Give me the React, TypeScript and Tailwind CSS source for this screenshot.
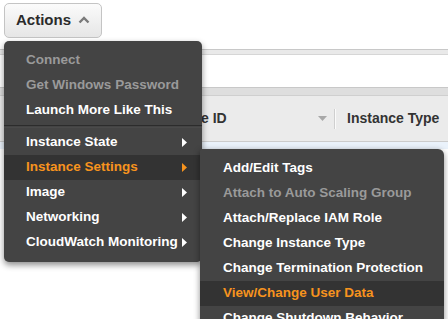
import React from 'react';

const mainItems = [
  { label: 'Connect', disabled: true },
  { label: 'Get Windows Password', disabled: true },
  { label: 'Launch More Like This' },
  { sep: true },
  { label: 'Instance State', sub: true },
  { label: 'Instance Settings', sub: true, active: true },
  { label: 'Image', sub: true },
  { label: 'Networking', sub: true },
  { label: 'CloudWatch Monitoring', sub: true },
];

const subItems = [
  { label: 'Add/Edit Tags' },
  { label: 'Attach to Auto Scaling Group', disabled: true },
  { label: 'Attach/Replace IAM Role' },
  { label: 'Change Instance Type' },
  { label: 'Change Termination Protection' },
  { label: 'View/Change User Data', active: true },
  { label: 'Change Shutdown Behavior' },
];

const itemColor = (it: { active?: boolean; disabled?: boolean }) =>
  it.active ? 'bg-[#333333] text-[#f7931e]' : it.disabled ? 'text-[#9a9a9a]' : 'text-white';

const Arrow = ({ active }: { active?: boolean }) => (
  <svg width="5" height="9" viewBox="0 0 5 9" className="shrink-0">
    <path d="M0 0 L5 4.5 L0 9 Z" fill={active ? '#f7931e' : '#ffffff'} />
  </svg>
);

const App = () => {
  return (
    <div className="relative w-[448px] h-[319px] overflow-hidden bg-white font-['Liberation_Sans',Arial,sans-serif]">
      {/* top bar with button */}
      <div className="flex h-[49px] items-start pt-[3px] pl-[4px]">
        <button className="flex items-center h-[35px] w-[98px] rounded-[5px] border border-[#c4c4c4] bg-gradient-to-b from-[#fbfbfb] to-[#e6e6e6] pl-[11px] text-[15px] font-bold text-[#2b2b2b]">
          Actions
          <svg width="12" height="8" viewBox="0 0 12 8" className="ml-[7px] mt-[-2px]">
            <path d="M1.5 6.5 L6 2 L10.5 6.5" stroke="#7a7a7a" strokeWidth="2.4" fill="none" />
          </svg>
        </button>
      </div>

      {/* filter strip */}
      <div className="h-[6px] border-t border-b border-t-[#c8c8c8] border-b-[#d6d6d6] bg-[#e9e9e9]" />
      <div className="h-[32px] bg-white" />
      <div className="h-[8px] border-t border-[#c8c8c8] bg-[#dedede]" />

      {/* table header */}
      <div className="flex h-[47px] items-center border-t border-b border-t-[#cfcfcf] border-b-[#cccccc] bg-[#ebebeb] pl-[152px] text-[14px] font-bold text-[#333]">
        <div className="flex w-[182px] items-center justify-between pr-[7px]">
          <span>Instance ID</span>
          <svg width="9" height="5" viewBox="0 0 9 5">
            <path d="M0 0 L9 0 L4.5 5 Z" fill="#a8a8a8" />
          </svg>
        </div>
        <div className="h-[20px] w-[2px] border-l border-r border-l-[#cfcfcf] border-r-[#fafafa]" />
        <span className="pl-[11px] whitespace-nowrap">Instance Type</span>
      </div>
      <div className="h-[7px] bg-[#eaf2fb]" />

      {/* main dropdown */}
      <div className="absolute left-[4px] top-[41px] w-[198px] rounded-[5px] bg-[#444444] py-[7px] shadow-[0_3px_6px_rgba(0,0,0,0.45)] text-[13.5px] font-bold">
        {mainItems.map((it, i) =>
          it.sep ? (
            <div key={i} className="my-[2px] h-[3px] border-t border-[#2c2c2c] border-b border-b-[#4a4a4a]" />
          ) : (
            <div key={i} className={'flex h-[25px] items-center justify-between pl-[22px] pr-[15px] ' + itemColor(it)}>
              <span>{it.label}</span>
              {it.sub && <Arrow active={it.active} />}
            </div>
          )
        )}
      </div>

      {/* sub menu */}
      <div className="absolute left-[200px] top-[149px] w-[244px] h-[200px] rounded-tr-[6px] rounded-tl-[2px] bg-[#444444] pt-[7px] shadow-[0_2px_6px_rgba(0,0,0,0.45)] text-[13.5px] font-bold">
        {subItems.map((it, i) => (
          <div key={i} className={'flex h-[25px] items-center pl-[23px] ' + itemColor(it)}>
            {it.label}
          </div>
        ))}
      </div>
    </div>
  );
};

export default App;
